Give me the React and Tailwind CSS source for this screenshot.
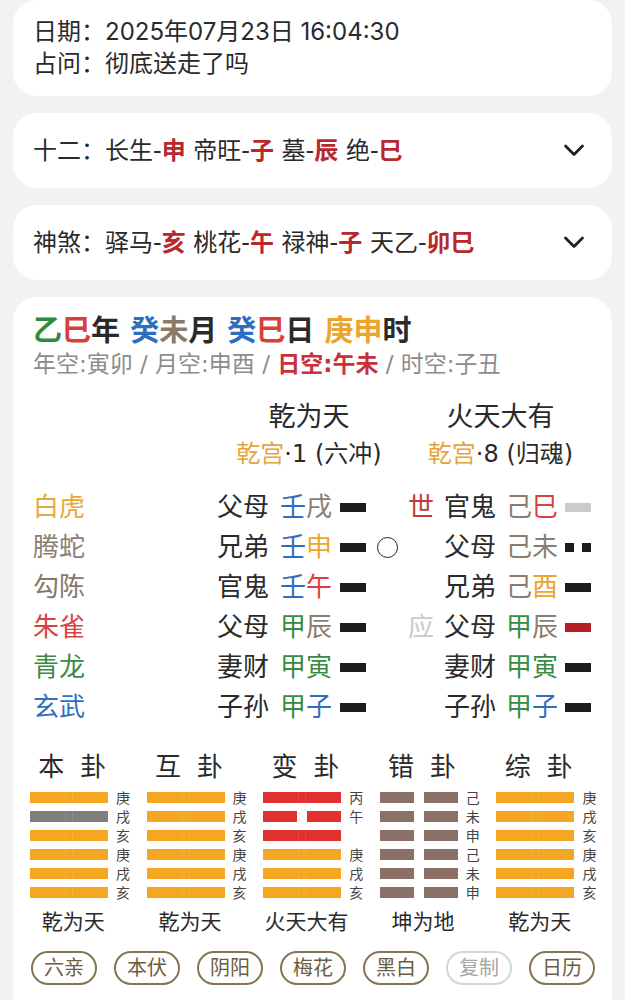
import React from "react";

const RED = "text-[#b8282d]";

const gods = [
  ["白虎", "text-[#e8a83a]"],
  ["腾蛇", "text-[#8a7d70]"],
  ["勾陈", "text-[#857868]"],
  ["朱雀", "text-[#d9413d]"],
  ["青龙", "text-[#3b8b44]"],
  ["玄武", "text-[#2f6fbe]"],
];

const blue = "text-[#2f6fbe]";
const brown = "text-[#8a7d70]";
const orange = "text-[#eea52c]";
const red = "text-[#da3f3c]";
const green = "text-[#3b8b44]";

// left gua (乾为天) and right gua (火天大有), top line first
const rows = [
  { l: ["父母", "壬", blue, "戌", brown], ly: "yang", side: "世", sc: "text-[#c23a3c]", r: ["官鬼", "己", brown, "巳", red], ry: "gray" },
  { l: ["兄弟", "壬", blue, "申", orange], ly: "yang", moving: true, r: ["父母", "己", brown, "未", brown], ry: "yin" },
  { l: ["官鬼", "壬", blue, "午", red], ly: "yang", r: ["兄弟", "己", brown, "酉", orange], ry: "yang" },
  { l: ["父母", "甲", green, "辰", brown], ly: "yang", side: "应", sc: "text-[#cacaca]", r: ["父母", "甲", green, "辰", brown], ry: "red" },
  { l: ["妻财", "甲", green, "寅", green], ly: "yang", r: ["妻财", "甲", green, "寅", green], ry: "yang" },
  { l: ["子孙", "甲", green, "子", blue], ly: "yang", r: ["子孙", "甲", green, "子", blue], ry: "yang" },
];

function Yao({ kind }) {
  if (kind === "yin") {
    return (
      <div className="flex w-[26px] justify-between">
        <div className="h-[9px] w-[9px] bg-[#1c1c1c]" />
        <div className="h-[9px] w-[9px] bg-[#1c1c1c]" />
      </div>
    );
  }
  const color = kind === "gray" ? "bg-[#cbcbcb]" : kind === "red" ? "bg-[#b21f25]" : "bg-[#1c1c1c]";
  return <div className={`h-[9px] w-[26px] ${color}`} />;
}

const Chevron = () => (
  <svg width="22" height="15" viewBox="0 0 22 15" fill="none" stroke="#222" strokeWidth="2.8" strokeLinecap="round" strokeLinejoin="round">
    <path d="M2.5 3 L11 11.5 L19.5 3" />
  </svg>
);

// bottom trigram blocks
const BAR = {
  o: "bg-[#f5a623]",
  g: "bg-[#7f7f7f]",
  r: "bg-[#e0302f]",
  b: "bg-[#8b7067]",
};

const guas = [
  { title: ["本", "卦"], name: "乾为天", lines: [["o", 1, "庚"], ["g", 1, "戌"], ["o", 1, "亥"], ["o", 1, "庚"], ["o", 1, "戌"], ["o", 1, "亥"]] },
  { title: ["互", "卦"], name: "乾为天", lines: [["o", 1, "庚"], ["o", 1, "戌"], ["o", 1, "亥"], ["o", 1, "庚"], ["o", 1, "戌"], ["o", 1, "亥"]] },
  { title: ["变", "卦"], name: "火天大有", lines: [["r", 1, "丙"], ["r", 0, "午"], ["r", 1, ""], ["o", 1, "庚"], ["o", 1, "戌"], ["o", 1, "亥"]] },
  { title: ["错", "卦"], name: "坤为地", lines: [["b", 0, "己"], ["b", 0, "未"], ["b", 0, "申"], ["b", 0, "己"], ["b", 0, "未"], ["b", 0, "申"]] },
  { title: ["综", "卦"], name: "乾为天", lines: [["o", 1, "庚"], ["o", 1, "戌"], ["o", 1, "亥"], ["o", 1, "庚"], ["o", 1, "戌"], ["o", 1, "亥"]] },
];

function Bar({ color, yang }) {
  const c = BAR[color];
  if (!yang) {
    return (
      <div className="flex h-[11px] w-[78px] gap-[10px]">
        <div className={`flex-1 ${c}`} />
        <div className={`flex-1 ${c}`} />
      </div>
    );
  }
  return (
    <div className="flex h-[11px] w-[78px]">
      <div className={`w-[35px] ${c}`} />
      <div className={`w-[8px] border-x border-white/10 ${c}`} />
      <div className={`w-[35px] ${c}`} />
    </div>
  );
}

const buttons = ["六亲", "本伏", "阴阳", "梅花", "黑白", "复制", "日历"];

export default function App() {
  return (
    <div className="min-h-screen bg-[#f2f2f2] px-[13px] text-[#2a2a2a] [font-family:'DejaVu_Sans','Noto_Sans_CJK_SC',sans-serif]">
      <div className="flex flex-col gap-[17px]">
        <div className="rounded-[24px] bg-white px-[20px] py-[15px] text-[24px] leading-[33px]">
          <div className="[font-family:Inter,'Noto_Sans_CJK_SC',sans-serif]">日期：2025年07月23日 16:04:30</div>
          <div>占问：彻底送走了吗</div>
        </div>

        <div className="flex h-[75px] items-center justify-between rounded-[24px] bg-white pl-[20px] pr-[27px] text-[24px]">
          <div className="whitespace-nowrap">
            十二：长生-<span className={`font-semibold ${RED}`}>申</span> 帝旺-<span className={`font-semibold ${RED}`}>子</span> 墓-<span className={`font-semibold ${RED}`}>辰</span> 绝-<span className={`font-semibold ${RED}`}>巳</span>
          </div>
          <Chevron />
        </div>

        <div className="flex h-[75px] items-center justify-between rounded-[24px] bg-white pl-[20px] pr-[27px] text-[24px]">
          <div className="whitespace-nowrap">
            神煞：驿马-<span className={`font-semibold ${RED}`}>亥</span> 桃花-<span className={`font-semibold ${RED}`}>午</span> 禄神-<span className={`font-semibold ${RED}`}>子</span> 天乙-<span className={`font-semibold ${RED}`}>卯巳</span>
          </div>
          <Chevron />
        </div>

        <div className="rounded-[24px] bg-white px-[20px] pt-[16px] pb-[40px]">
          <div className="whitespace-nowrap text-[29px] font-bold leading-[36px]">
            <span className="text-[#2f8a3c]">乙</span><span className="text-[#d8403c]">巳</span>年{" "}
            <span className="text-[#2d6fbf]">癸</span><span className="text-[#8c7a68]">未</span>月{" "}
            <span className="text-[#2d6fbf]">癸</span><span className="text-[#d8403c]">巳</span>日{" "}
            <span className="text-[#eea32a]">庚申</span>时
          </div>
          <div className="whitespace-nowrap text-[23px] leading-[30px] text-[#8c8c8c]">
            年空:寅卯 / 月空:申酉 / <span className="font-bold text-[#c8303a]">日空:午未</span> / 时空:子丑
          </div>

          <div className="mt-[21px] flex whitespace-nowrap">
            <div className="w-[184px] shrink-0" />
            <div className="w-[184px] shrink-0 text-center">
              <div className="text-[27px] leading-[34px]">乾为天</div>
              <div className="mt-[5px] text-[24px] leading-[30px]">
                <span className="text-[#e5a43c]">乾宫</span>·1 (六冲)
              </div>
            </div>
            <div className="ml-[8px] w-[183px] shrink-0 text-center">
              <div className="text-[27px] leading-[34px]">火天大有</div>
              <div className="mt-[5px] text-[24px] leading-[30px]">
                <span className="text-[#e5a43c]">乾宫</span>·8 (归魂)
              </div>
            </div>
          </div>

          <div className="mt-[18px] flex flex-col">
            {rows.map((row, i) => (
              <div key={i} className="flex h-[40px] items-center whitespace-nowrap text-[26px] leading-none">
                <div className={`w-[184px] shrink-0 ${gods[i][1]}`}>{gods[i][0]}</div>
                <div className="w-[52px] shrink-0">{row.l[0]}</div>
                <div className="ml-[11px] w-[52px] shrink-0">
                  <span className={row.l[2]}>{row.l[1]}</span>
                  <span className={row.l[4]}>{row.l[3]}</span>
                </div>
                <div className="ml-[8px] shrink-0">
                  <Yao kind={row.ly} />
                </div>
                <div className="ml-[10px] flex w-[23px] shrink-0 justify-center">
                  {row.moving && <div className="h-[21px] w-[21px] rounded-full border-[1.5px] border-[#222]" />}
                </div>
                <div className={`ml-[9px] w-[26px] shrink-0 ${row.sc || ""}`}>{row.side || ""}</div>
                <div className="ml-[10px] w-[52px] shrink-0">{row.r[0]}</div>
                <div className="ml-[10px] w-[52px] shrink-0">
                  <span className={row.r[2]}>{row.r[1]}</span>
                  <span className={row.r[4]}>{row.r[3]}</span>
                </div>
                <div className="ml-[7px] shrink-0">
                  <Yao kind={row.ry} />
                </div>
              </div>
            ))}
          </div>

          <div className="-mx-[12px] mt-[23px] grid grid-cols-5">
            {guas.map((g, i) => (
              <div key={i} className="flex flex-col">
                <div className="flex justify-center gap-[16px] pr-[14px] text-[26px] leading-[34px]">
                  <span>{g.title[0]}</span>
                  <span>{g.title[1]}</span>
                </div>
                <div className="mt-[8px] flex flex-col gap-[8px] pl-[9px]">
                  {g.lines.map((ln, j) => (
                    <div key={j} className="flex h-[11px] items-center">
                      <Bar color={ln[0]} yang={ln[1]} />
                      <span className="ml-[8px] text-[14px] leading-none text-[#444]">{ln[2]}</span>
                    </div>
                  ))}
                </div>
                <div className="mt-[9px] whitespace-nowrap pr-[12px] text-center text-[21px] leading-[30px]">{g.name}</div>
              </div>
            ))}
          </div>

          <div className="-ml-[2px] -mr-[4px] mt-[14px] flex gap-[17px] overflow-hidden">
            {buttons.map((b) => (
              <div
                key={b}
                className={`flex h-[34px] w-[66px] shrink-0 items-center justify-center rounded-full border-2 text-[20px] ${
                  b === "复制" ? "border-[#d6d6d6] text-[#a6a6a6]" : "border-[#857653] text-[#6b5d3f]"
                }`}
              >
                {b}
              </div>
            ))}
          </div>
        </div>
      </div>
    </div>
  );
}
